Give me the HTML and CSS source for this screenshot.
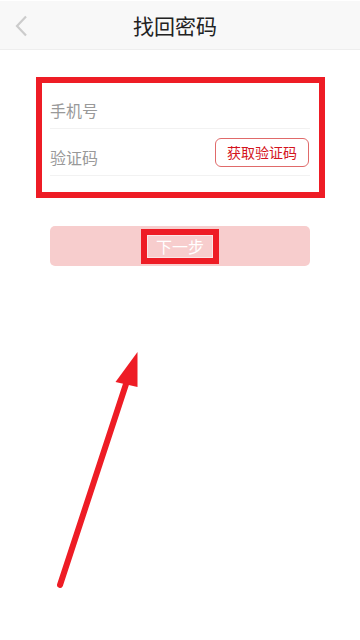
FILE: index.html
```html
<!DOCTYPE html>
<html lang="zh-CN">
<head>
    <meta charset="UTF-8">
    <meta name="viewport" content="width=device-width, initial-scale=1.0">
    <title>找回密码</title>
    <link rel="stylesheet" href="styles.css">
</head>
<body>

    <div class="page">
        <div class="header">
            <span class="back">
                <svg width="14" height="22" viewBox="0 0 14 22">
                    <polyline points="11,1.5 2,11 11,20.5" fill="none" stroke="#cccccc" stroke-width="2.2"/>
                </svg>
            </span>
            <h1>找回密码</h1>
        </div>

        <div class="form">
            <div class="row">
                <span class="label">手机号</span>
            </div>
            <div class="row">
                <span class="label">验证码</span>
                <button class="code-btn">获取验证码</button>
            </div>
        </div>

        <div class="next-btn">下一步</div>

        <!-- 标注 -->
        <div class="mark mark-form"></div>
        <div class="mark mark-next"></div>
        <svg class="arrow" width="360" height="640" viewBox="0 0 360 640">
            <line x1="60" y1="585" x2="129" y2="375" stroke="#ee1c25" stroke-width="6" stroke-linecap="round"/>
            <polygon points="137.5,352 115.5,382 137.5,387" fill="#ee1c25"/>
        </svg>
    </div>

</body>
</html>
```

FILE: styles.css
```css
body {
    margin: 0;
    font-family: "Noto Sans CJK SC", "Noto Sans", sans-serif;
    background-color: #ffffff;
}

.page {
    position: relative;
    width: 360px;
    height: 640px;
    overflow: hidden;
}

.header {
    position: relative;
    height: 48px;
    margin-top: 1px;
    background-color: #f8f8f8;
    border-bottom: 1px solid #eeeeee;
    display: flex;
    justify-content: center;
    align-items: center;
}

.header h1 {
    margin: 0 0 0 -10px;
    font-size: 21px;
    font-weight: normal;
    color: #222222;
}

.back {
    position: absolute;
    left: 15px;
    top: 14px;
    height: 22px;
}

.form {
    margin: 32px 50px 0;
}

.row {
    height: 46px;
    border-bottom: 1px solid #f2f2f2;
    display: flex;
    justify-content: space-between;
    align-items: center;
}

.label {
    padding-top: 9px;
    font-size: 16px;
    color: #999999;
}

.code-btn {
    height: 29px;
    margin-right: 1px;
    padding: 0 11px;
    border: 1px solid #e06a6a;
    border-radius: 6px;
    background-color: #ffffff;
    font-family: "Noto Sans CJK SC", sans-serif;
    font-size: 14px;
    color: #d4141c;
}

.next-btn {
    margin: 50px 50px 0;
    height: 40px;
    line-height: 40px;
    border-radius: 5px;
    background-color: #f7cdcd;
    text-align: center;
    font-size: 16px;
    color: #ffffff;
}

.mark {
    position: absolute;
    border: 6px solid #ee1c25;
    box-sizing: border-box;
    box-shadow: inset 0 0 0 1px rgba(255, 255, 255, 0.5);
}

.mark-form {
    left: 36px;
    top: 77px;
    width: 289px;
    height: 121px;
}

.mark-next {
    left: 141px;
    top: 229px;
    width: 78px;
    height: 35px;
}

.arrow {
    position: absolute;
    left: 0;
    top: 0;
}
```
